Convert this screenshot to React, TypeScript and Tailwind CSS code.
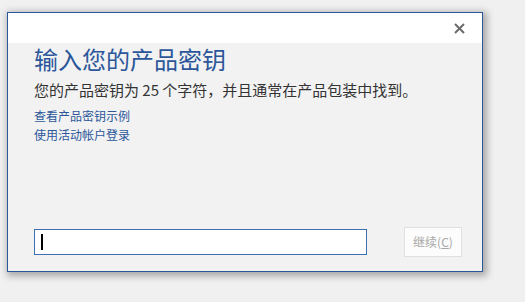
import React from "react";

export default function App() {
  return (
    <div
      className="w-[525px] h-[302px] bg-[#f0f0f0] pl-[7px] pt-[12px] overflow-hidden"
      style={{ fontFamily: '"Noto Sans CJK SC", "Noto Sans", sans-serif' }}
    >
      <div className="w-[476px] h-[260px] border border-[#2b579a] bg-[#f2f2f2] flex flex-col shadow-[2px_2px_7px_2px_rgba(0,0,0,0.3)]">
        <div className="h-[30px] bg-white flex items-center justify-end pr-[17px] shrink-0">
          <svg width="11" height="11" viewBox="0 0 11 11">
            <path d="M1 1 L10 10 M10 1 L1 10" stroke="#6b6b6b" strokeWidth="2" />
          </svg>
        </div>
        <div className="flex-1 flex flex-col pl-[26px] pr-[20px] pb-[14px]">
          <div className="text-[24px] leading-[30px] text-[#2b579a] mt-[1px]">
            输入您的产品密钥
          </div>
          <div className="text-[15px] leading-[20px] text-[#333333] mt-[6px]">
            您的产品密钥为 25 个字符，并且通常在产品包装中找到。
          </div>
          <div className="text-[12px] leading-[19px] text-[#2b579a] mt-[6px]">
            查看产品密钥示例
          </div>
          <div className="text-[12px] leading-[19px] text-[#2b579a]">
            使用活动帐户登录
          </div>
          <div className="flex-1" />
          <div className="flex items-center justify-between">
            <div className="w-[333px] h-[26px] border border-[#3f6fb6] bg-white flex items-center pl-[6px]">
              <div className="w-[2px] h-[16px] bg-black" />
            </div>
            <div className="w-[58px] h-[30px] border border-[#e0e0e0] bg-[#fcfcfc] flex items-center justify-center text-[12px] text-[#a8a8a8]">
              继续(<span className="underline">C</span>)
            </div>
          </div>
        </div>
      </div>
    </div>
  );
}
